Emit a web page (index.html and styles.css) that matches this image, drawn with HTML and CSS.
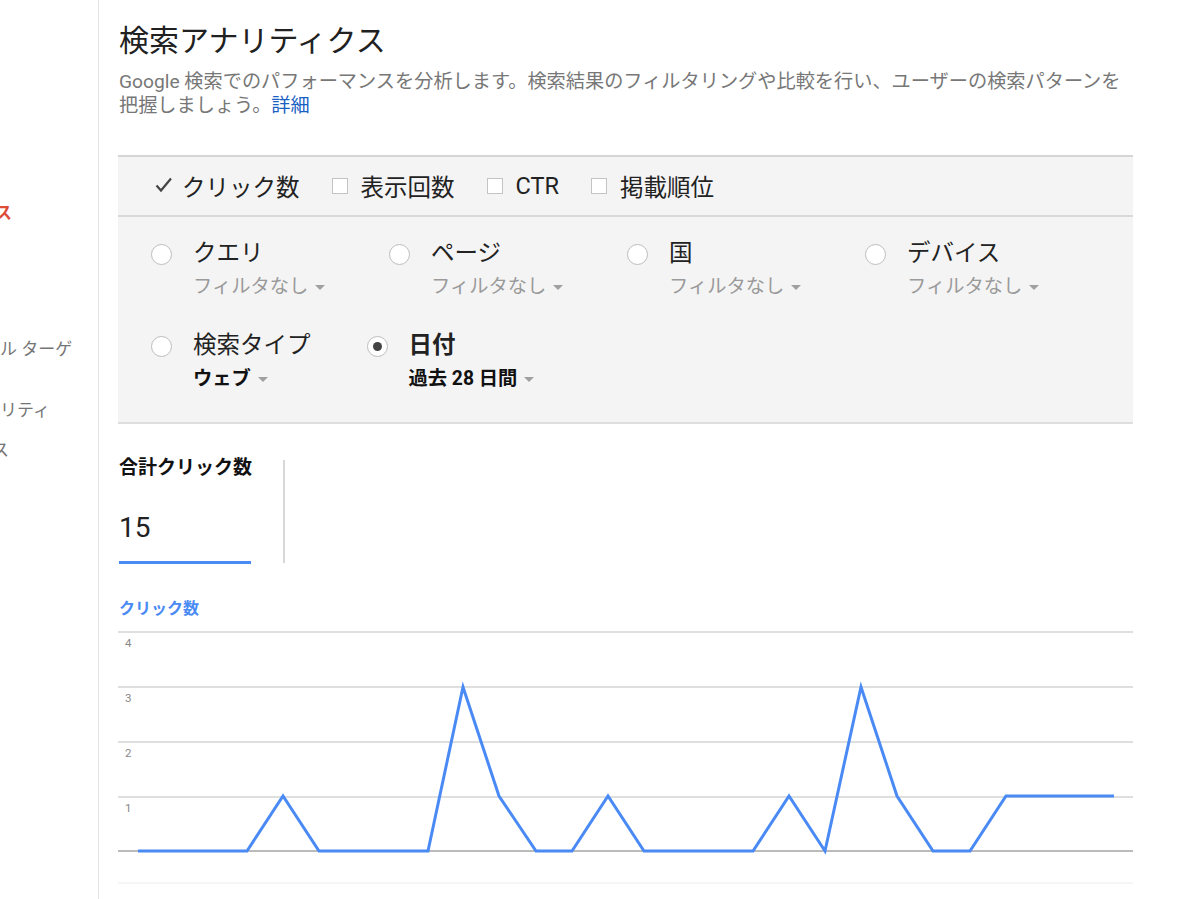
FILE: index.html
```html
<!DOCTYPE html>
<html lang="ja">
<head>
<meta charset="utf-8">
<title>検索アナリティクス</title>
<link rel="stylesheet" href="styles.css">
</head>
<body>
<div class="layout">
  <nav class="sidebar">
    <div class="side-item active">ス</div>
    <div class="side-item s2">ル ターゲ</div>
    <div class="side-item s3">リティ</div>
    <div class="side-item s4">ス</div>
  </nav>
  <main class="main">
    <h1 class="title">検索アナリティクス</h1>
    <p class="desc">Google 検索でのパフォーマンスを分析します。検索結果のフィルタリングや比較を行い、ユーザーの検索パターンを<br>把握しましょう。<a class="link" href="#">詳細</a></p>

    <section class="panel">
      <div class="metrics">
        <label class="metric">
          <svg class="check" width="18" height="16" viewBox="0 0 18 16"><polyline points="1.5,8.5 6,13.5 16,1.5" fill="none" stroke="#444" stroke-width="2.2"/></svg>
          <span>クリック数</span>
        </label>
        <label class="metric"><span class="box"></span><span>表示回数</span></label>
        <label class="metric"><span class="box"></span><span class="latin">CTR</span></label>
        <label class="metric"><span class="box"></span><span>掲載順位</span></label>
      </div>
      <div class="dims">
        <div class="dim-row grid">
          <div class="dim"><span class="radio"></span><div><div class="dim-label">クエリ</div><div class="dim-sub">フィルタなし<span class="caret"></span></div></div></div>
          <div class="dim"><span class="radio"></span><div><div class="dim-label">ページ</div><div class="dim-sub">フィルタなし<span class="caret"></span></div></div></div>
          <div class="dim"><span class="radio"></span><div><div class="dim-label">国</div><div class="dim-sub">フィルタなし<span class="caret"></span></div></div></div>
          <div class="dim"><span class="radio"></span><div><div class="dim-label">デバイス</div><div class="dim-sub">フィルタなし<span class="caret"></span></div></div></div>
        </div>
        <div class="dim-row inline">
          <div class="dim"><span class="radio"></span><div><div class="dim-label">検索タイプ</div><div class="dim-sub strong">ウェブ<span class="caret"></span></div></div></div>
          <div class="dim"><span class="radio checked"></span><div><div class="dim-label bold">日付</div><div class="dim-sub strong">過去 28 日間<span class="caret"></span></div></div></div>
        </div>
      </div>
    </section>

    <section class="summary">
      <div class="card">
        <div class="card-label">合計クリック数</div>
        <div class="card-value">15</div>
        <div class="card-bar"></div>
      </div>
      <div class="divider"></div>
    </section>

    <div class="chart-title">クリック数</div>
    <svg class="chart" width="1015" height="274" viewBox="0 0 1015 274">
      <line x1="0" y1="7" x2="1015" y2="7" stroke="#d4d4d4" stroke-width="1.5"/>
      <line x1="0" y1="62" x2="1015" y2="62" stroke="#d4d4d4" stroke-width="1.5"/>
      <line x1="0" y1="117" x2="1015" y2="117" stroke="#d4d4d4" stroke-width="1.5"/>
      <line x1="0" y1="172" x2="1015" y2="172" stroke="#d4d4d4" stroke-width="1.5"/>
      <line x1="0" y1="258" x2="1015" y2="258" stroke="#ececec" stroke-width="1"/>
      <line x1="0" y1="226" x2="1015" y2="226" stroke="#777" stroke-width="1"/>
      <g class="ylab">
        <text x="7" y="22">4</text>
        <text x="7" y="77">3</text>
        <text x="7" y="132">2</text>
        <text x="7" y="187">1</text>
      </g>
      <polyline fill="none" stroke="#4a8af4" stroke-width="3" stroke-linejoin="miter"
        points="20,226 56,226 92,226 129,226 165,171 201,226 237,226 273,226 310,226 345,62 381,171 418,226 454,226 490,171 526,226 562,226 598,226 635,226 671,171 707,226 743,62 779,171 815,226 852,226 888,171 924,171 960,171 996,171"/>
    </svg>
  </main>
</div>
</body>
</html>
```

FILE: styles.css
```css
* { box-sizing: border-box; }
html, body { margin: 0; padding: 0; background: #fff; }
body {
  font-family: Roboto, "Noto Sans CJK JP", sans-serif;
  color: #222;
  width: 1200px;
  height: 899px;
  overflow: hidden;
}
.layout { display: flex; height: 899px; }

.sidebar {
  width: 99px;
  flex: none;
  border-right: 1px solid #e4e4e4;
  overflow: hidden;
  white-space: nowrap;
  font-size: 17px;
  color: #757575;
  padding-top: 200px;
}
.side-item { line-height: 26px; height: 26px; }
.side-item.active { color: #dd4b39; font-weight: 700; margin-left: -5px; }
.side-item.s2 { margin-top: 110px; }
.side-item.s3 { margin-top: 35px; }
.side-item.s4 { margin-top: 14px; margin-left: -8px; }

.main { flex: 1; padding: 23px 0 0 20px; }

.title {
  margin: 0;
  font-size: 30px;
  line-height: 36px;
  font-weight: 400;
  color: #212121;
}
.desc {
  margin: 11px 0 0;
  font-size: 19.2px;
  line-height: 24px;
  color: #777;
}
.link { color: #1a5fc4; text-decoration: none; }

.panel {
  width: 1015px;
  margin: 37px 0 0 -1px;
  background: #f4f4f4;
  border-top: 2px solid #d5d5d5;
  border-bottom: 2px solid #dedede;
}
.metrics {
  display: flex;
  align-items: center;
  height: 60px;
  padding-left: 37px;
  border-bottom: 2px solid #dadada;
  font-size: 23.5px;
  column-gap: 32px;
}
.metric { display: flex; align-items: center; }
.check { margin-right: 9px; margin-top: -2px; }
.box {
  width: 16px; height: 16px;
  background: #fff;
  border: 1px solid #c4c4c4;
  margin-right: 13px;
}
.latin { font-size: 23.5px; }

.dims { padding: 21px 0 28px 33px; }
.dim-row.grid { display: grid; grid-template-columns: repeat(4, 238px); }
.dim-row.inline { display: flex; column-gap: 56px; margin-top: 28px; }
.dim { display: flex; align-items: flex-start; }
.radio {
  width: 21px; height: 21px;
  border-radius: 50%;
  background: #fff;
  border: 1px solid #bdbdbd;
  margin-top: 6px;
  margin-right: 21px;
  flex: none;
  display: flex; align-items: center; justify-content: center;
}
.radio.checked::after {
  content: "";
  width: 9px; height: 9px;
  border-radius: 50%;
  background: #444;
}
.dim-label { font-size: 23.5px; line-height: 30px; }
.dim-label.bold { font-weight: 700; }
.dim-sub {
  margin-top: 4px;
  font-size: 19.3px;
  line-height: 30px;
  color: #9a9a9a;
  white-space: nowrap;
}
.dim-sub.strong { color: #111; font-weight: 700; }
.caret {
  display: inline-block;
  width: 0; height: 0;
  border-left: 5px solid transparent;
  border-right: 5px solid transparent;
  border-top: 5px solid #a0a0a0;
  margin-left: 7px;
  vertical-align: middle;
}

.summary { display: flex; align-items: flex-start; margin-top: 32px; }
.card { width: 132px; }
.card-label { font-size: 19px; font-weight: 700; line-height: 24px; color: #111; white-space: nowrap; }
.card-value { margin-top: 30px; font-size: 28px; line-height: 36px; color: #222; }
.card-bar { margin-top: 15px; height: 3px; background: #4a8af4; }
.divider { width: 2px; height: 103px; background: #d8d8d8; margin: 4px 0 0 32px; }

.chart-title {
  margin-top: 35px;
  font-size: 16px;
  line-height: 20px;
  font-weight: 700;
  color: #4a8af4;
}
.chart { display: block; margin: 6px 0 0 -1px; }
.ylab text { font-family: Roboto, sans-serif; font-size: 11.5px; fill: #888; }
```
